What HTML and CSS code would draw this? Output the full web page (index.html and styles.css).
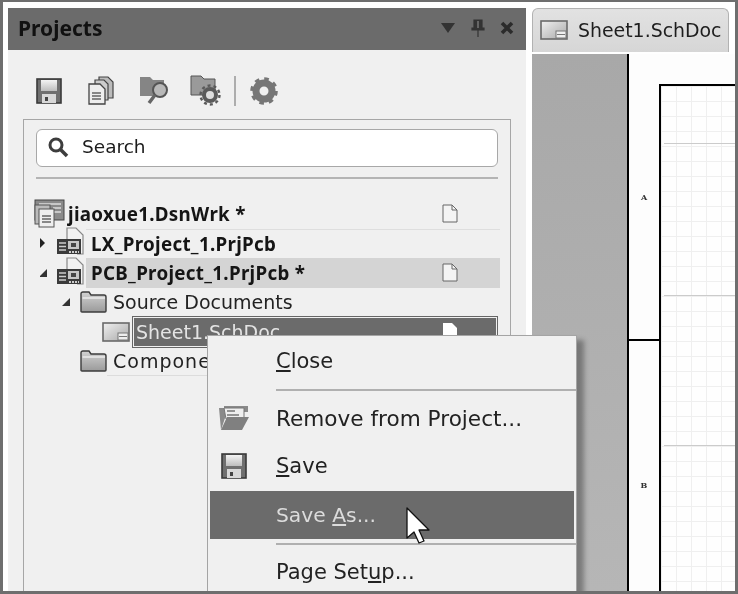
FILE: index.html
```html
<!DOCTYPE html>
<html lang="en">
<head>
<meta charset="utf-8">
<title>Projects</title>
<link rel="stylesheet" href="styles.css">
</head>
<body>
<svg class="defs" width="0" height="0" aria-hidden="true">
  <defs>
    <linearGradient id="fold" x1="0" y1="0" x2="0" y2="1"><stop offset="0" stop-color="#d2d2d2"/><stop offset="1" stop-color="#9a9a9a"/></linearGradient>
    <linearGradient id="sch" x1="0" y1="0" x2="1" y2="1"><stop offset="0" stop-color="#f0f0f0"/><stop offset="1" stop-color="#a8a8a8"/></linearGradient>
    <linearGradient id="disk" x1="0" y1="0" x2="0" y2="1"><stop offset="0" stop-color="#f4f4f4"/><stop offset="1" stop-color="#bdbdbd"/></linearGradient>
    <symbol id="folder" viewBox="0 0 27 22"><path d="M1 20V3q0-2 2-2h6l2 3h13q2 0 2 2v14q0 1-1 1H2q-1 0-1-1z" fill="url(#fold)" stroke="#3c3c3c" stroke-width="1.4"/><path d="M2.5 7H25" stroke="#eee" stroke-width="1.4"/></symbol>
    <symbol id="sheet" viewBox="0 0 28 20"><rect x="1" y="1" width="26" height="18" fill="url(#sch)" stroke="#6a6a6a" stroke-width="1.6"/><rect x="16" y="11" width="10" height="7" fill="#eee" stroke="#777"/><path d="M17 14.500h8" stroke="#777"/></symbol>
    <symbol id="doc" viewBox="0 0 16 19"><path d="M1 1h9l5 5v12H1z" fill="#f4f4f4" stroke="#666" stroke-width="1"/><path d="M10 1v5h5" fill="none" stroke="#666" stroke-width="1"/></symbol>
    <symbol id="docw" viewBox="0 0 16 19"><path d="M1 1h9l5 5v12H1z" fill="#fff"/></symbol>
    <symbol id="pcb" viewBox="0 0 30 30"><path d="M11 14V2h9l7 7v19h-6" fill="#f2f2f2" stroke="#888" stroke-width="1.200"/><rect x="1" y="13" width="24" height="15" fill="#3a3a3a"/><path d="M3 17h7M3 20.500h7M3 24h7" stroke="#ccc" stroke-width="1.600"/><rect x="12" y="15" width="11" height="8" fill="#c4c4c4"/><rect x="15" y="17" width="5" height="4" fill="#444"/><path d="M13 26h10" stroke="#ccc" stroke-width="2" stroke-dasharray="2 1"/></symbol>
    <symbol id="save" viewBox="0 0 26 26"><rect x="1" y="1" width="24" height="24" fill="#6f6f6f" stroke="#3a3a3a" stroke-width="1.600"/><rect x="5" y="2" width="16" height="11" fill="url(#disk)"/><rect x="6" y="16" width="14" height="9" fill="#d8d8d8"/><rect x="9" y="19" width="3" height="4" fill="#444"/></symbol>
    <symbol id="gear" viewBox="0 0 28 28"><circle cx="14" cy="14" r="8" fill="none" stroke="#767676" stroke-width="7"/><circle cx="14" cy="14" r="12" fill="none" stroke="#767676" stroke-width="3.600" stroke-dasharray="4.500 4.900"/></symbol>
  </defs>
</svg>
<div class="frame">
  <section class="panel">
    <header class="panel-title">
      <h1>Projects</h1>
      <div class="title-tools">
        <svg width="16" height="12" viewBox="0 0 16 12"><path d="M1 1h14L8 11z" fill="#333"/></svg>
        <svg width="14" height="18" viewBox="0 0 14 18"><path d="M3 1h8v8h2v2H1V9h2zM7 11v7" fill="#333" stroke="#333" stroke-width="1.2"/><path d="M7 2v7" stroke="#777" stroke-width="1.500"/></svg>
        <svg width="14" height="14" viewBox="0 0 14 14"><path d="M2 2l10 10M12 2L2 12" stroke="#2b2b2b" stroke-width="3.600"/></svg>
      </div>
    </header>
    <div class="toolbar">
      <svg class="t-save" width="26" height="26"><use href="#save"/></svg>
      <svg class="t-docs" width="27" height="29" viewBox="0 0 27 29"><path d="M11 1h9l5 5v16H11z" fill="#bbb" stroke="#444" stroke-width="1.200"/><path d="M7 4h9l4 4v16H7z" fill="#ccc" stroke="#444" stroke-width="1.200"/><path d="M1 8h11l5 5v15H1z" fill="#eee" stroke="#444" stroke-width="1.300"/><path d="M4 17h9M4 20h9M4 23h9" stroke="#666" stroke-width="1.300"/></svg>
      <svg class="t-find" width="31" height="29" viewBox="0 0 31 29"><path d="M1 20V1h10l3 3h11v16z" fill="#858585"/><circle cx="21" cy="14" r="7" fill="#b8b8b8" stroke="#555" stroke-width="2"/><path d="M16 19l-6 8" stroke="#666" stroke-width="3.400"/></svg>
      <svg class="t-fgear" width="31" height="31" viewBox="0 0 31 31"><path d="M1 20V1h10l3 3h11v16z" fill="#9a9a9a" stroke="#555"/><circle cx="20" cy="20" r="6" fill="#ddd" stroke="#5a5a5a" stroke-width="4"/><circle cx="20" cy="20" r="9.500" fill="none" stroke="#5a5a5a" stroke-width="2.400" stroke-dasharray="3 3"/></svg>
      <span class="t-sep"></span>
      <svg class="t-gear" width="28" height="28"><use href="#gear"/></svg>
    </div>
    <div class="box">
      <div class="search">
        <svg width="22" height="22" viewBox="0 0 22 22"><circle cx="9" cy="9" r="6" fill="none" stroke="#3d3d3d" stroke-width="3"/><path d="M13.500 13.500L20 20" stroke="#3d3d3d" stroke-width="3.600"/></svg>
        <span>Search</span>
      </div>
      <hr class="rule">
      <ul class="tree">
        <li class="row row-root">
          <svg class="i-wrk" width="32" height="30" viewBox="0 0 32 30"><rect x="1" y="1" width="29" height="20" fill="#8a8a8a" stroke="#444"/><path d="M5 5h22M19 9h8M19 13h8" stroke="#ddd" stroke-width="1.500"/><rect x="1" y="6" width="15" height="19" fill="#bbb" stroke="#555"/><rect x="5" y="10" width="15" height="18" fill="#eee" stroke="#555"/><path d="M8 17h9M8 20h9M8 23h9" stroke="#666" stroke-width="1.300"/></svg>
          <div class="label bold"><span>jiaoxue1.DsnWrk *</span><svg class="doc" width="16" height="19"><use href="#doc"/></svg></div>
        </li>
        <li class="row row-l1">
          <svg class="arrow" width="16" height="12" viewBox="0 0 16 12"><path d="M-1 0l6 6-6 6z" fill="#222"/></svg>
          <svg class="i-pcb" width="30" height="30"><use href="#pcb"/></svg>
          <div class="label bold rule-top"><span>LX_Project_1.PrjPcb</span></div>
        </li>
        <li class="row row-l1">
          <svg class="arrow" width="16" height="10" viewBox="0 0 16 10"><path d="M-1 9h8V1z" fill="#333"/></svg>
          <svg class="i-pcb" width="30" height="30"><use href="#pcb"/></svg>
          <div class="label bold current"><span>PCB_Project_1.PrjPcb *</span><svg class="doc" width="16" height="19"><use href="#doc"/></svg></div>
        </li>
        <li class="row row-l2">
          <svg class="arrow" width="18" height="10" viewBox="0 0 18 10"><path d="M0 9h8V1z" fill="#333"/></svg>
          <svg class="i-fold" width="27" height="22"><use href="#folder"/></svg>
          <div class="label"><span>Source Documents</span></div>
        </li>
        <li class="row row-l3">
          <svg class="i-sheet" width="28" height="20"><use href="#sheet"/></svg>
          <div class="label selected"><span>Sheet1.SchDoc</span><svg class="doc" width="16" height="19"><use href="#docw"/></svg></div>
        </li>
        <li class="row row-l2b">
          <svg class="i-fold" width="27" height="22"><use href="#folder"/></svg>
          <div class="label rule-bottom spaced"><span>Components</span></div>
        </li>
      </ul>
    </div>
  </section>

  <section class="editor">
    <div class="tabs">
      <div class="tab">
        <svg width="28" height="20"><use href="#sheet"/></svg>
        <span>Sheet1.SchDoc</span>
      </div>
    </div>
    <div class="workspace">
      <div class="sheet">
        <div class="ruler">
          <div class="zone zone-a">A</div>
          <div class="zone zone-b">B</div>
        </div>
        <div class="drawing"></div>
      </div>
    </div>
  </section>

  <nav class="menu">
    <div class="item item-first"><span class="ico"></span><span><u>C</u>lose</span></div>
    <div class="sep"></div>
    <div class="item">
      <span class="ico"><svg width="32" height="26" viewBox="0 0 32 26"><path d="M3 25L1 3h5V1h24v6H9z" fill="#8a8a8a"/><path d="M6 3h20v11H8z" fill="#efefef" stroke="#777"/><path d="M9 6h8M9 10h12" stroke="#777" stroke-width="1.500"/><path d="M3 25l6-13h22l-7 13z" fill="#808080"/></svg></span>
      <span class="wide">Remove from Project...</span>
    </div>
    <div class="item">
      <span class="ico"><svg width="26" height="26"><use href="#save"/></svg></span>
      <span><u>S</u>ave</span>
    </div>
    <div class="item item-hot"><span class="ico"></span><span class="narrow">Save <u>A</u>s...</span></div>
    <div class="sep sep-tight"></div>
    <div class="item"><span class="ico"></span><span>Page Set<u>u</u>p...</span></div>
  </nav>

  <svg class="cursor" width="25" height="38" viewBox="0 0 25 38"><path d="M1 1v30l7-6 5 11 5-2-5-11h10z" fill="#fff" stroke="#111" stroke-width="1.300" stroke-linejoin="round"/></svg>
</div>
</body>
</html>
```

FILE: styles.css
```css
* { box-sizing: border-box; }
html, body { margin: 0; padding: 0; background: #fff; }
.defs { display: block; height: 0; }
.frame {
  position: relative;
  display: flex;
  width: 738px;
  height: 594px;
  padding: 6px 0 0 5px;
  overflow: hidden;
  background: #fff;
  border: solid #6e6e6e;
  border-width: 2px 3px 3px 3px;
  font-family: "DejaVu Sans", sans-serif;
  color: #222;
  filter: blur(0.6px);
}

/* left panel */
.panel {
  display: flex;
  flex-direction: column;
  flex: none;
  width: 518px;
  background: #f0f0f0;
}
.panel-title {
  display: flex;
  align-items: center;
  justify-content: space-between;
  flex: none;
  height: 42px;
  padding: 0 12px 3px 10px;
  background: #6b6b6b;
}
.panel-title h1 {
  margin: 0;
  font-family: "Noto Sans", sans-serif;
  font-size: 21px;
  font-weight: 700;
  color: #111;
}
.title-tools { display: flex; align-items: center; gap: 15px; }
.toolbar {
  display: flex;
  align-items: center;
  flex: none;
  height: 69px;
  padding: 12px 0 0 28px;
}
.t-docs { margin-left: 26px; }
.t-find { margin-left: 24px; }
.t-fgear { margin-left: 20px; }
.t-sep { width: 2px; height: 30px; margin-left: 13px; background: #adadad; }
.t-gear { margin-left: 14px; }
.box {
  flex: 1;
  margin: 0 15px;
  padding: 9px 10px 0;
  border: 1px solid #a6a6a6;
  border-bottom: 0;
}
.search {
  display: flex;
  align-items: center;
  gap: 13px;
  height: 38px;
  margin: 0 2px;
  padding: 0 0 3px 10px;
  background: #fff;
  border: 1px solid #a8a8a8;
  border-radius: 6px;
  font-size: 18.500px;
  color: #1c1c1c;
}
.rule { height: 2px; margin: 10px 2px 0; border: 0; background: #b4b4b4; }
.tree { margin: 20px 0 0; padding: 0; list-style: none; }
.row { display: flex; align-items: center; height: 29.500px; }
.row-l1 { padding-left: 6px; }
.row-l2 { padding-left: 28px; }
.row-l2b { padding-left: 46px; }
.row-l3 { padding-left: 68px; }
.arrow, .i-wrk, .i-pcb, .i-fold, .i-sheet { flex: none; }
.i-pcb { margin-top: -4px; }
.label {
  display: flex;
  align-items: center;
  justify-content: space-between;
  flex: 1;
  height: 100%;
  padding: 0 42px 0 5px;
  font-size: 19px;
  white-space: nowrap;
}
.row-l2 .label, .row-l2b .label { padding-left: 6px; }
.spaced { letter-spacing: 1px; }
.bold {
  font-family: "Noto Sans", sans-serif;
  font-weight: 700;
  font-size: 18.800px;
  letter-spacing: 0.3px;
  color: #151515;
}
.row-root .label { padding-left: 2px; }
.rule-top { border-top: 1px solid #dedede; }
.rule-bottom { border-bottom: 1px solid #dcdcdc; }
.current { background: #d4d4d4; }
.selected {
  margin: 0 3px 0 3px;
  padding: 0 38px 0 2px;
  background: #6b6b6b;
  border: 1px solid #f0f0f0;
  outline: 1px solid #666;
  outline-offset: 0;
  color: #e4e4e4;
}

/* right side */
.editor {
  display: flex;
  flex-direction: column;
  flex: 1;
  min-width: 0;
  margin-left: 6px;
}
.tabs { flex: none; height: 46px; padding-right: 6px; }
.tab {
  display: flex;
  align-items: center;
  gap: 10px;
  height: 44px;
  padding: 0 0 2px 7px;
  background: linear-gradient(#e2e2e2, #d6d6d6);
  border: 1px solid #b2b2b2;
  border-bottom: 0;
  border-radius: 6px 6px 0 0;
  font-size: 18.900px;
  color: #1e1e1e;
  white-space: nowrap;
}
.workspace {
  flex: 1;
  min-height: 0;
  padding-left: 95px;
  background: linear-gradient(#a8a8a8, #b6b6b6);
}
.sheet {
  display: flex;
  height: 100%;
  background: #fdfdfd;
  border-left: 2px solid #000;
}
.ruler { flex: none; display: flex; flex-direction: column; width: 30px; }
.zone {
  display: flex;
  align-items: center;
  justify-content: center;
  flex: none;
  font-family: "DejaVu Serif", serif;
  font-size: 8px;
  font-weight: 700;
  color: #333;
}
.zone-a { height: 287px; border-bottom: 2px solid #000; }
.zone-b { height: 287px; }
.drawing {
  flex: 1;
  margin-top: 30px;
  border: solid #000;
  border-width: 2px 0 0 2px;
  background-color: #fefefe;
  background-image:
    linear-gradient(#cbcbcb, #cbcbcb),
    linear-gradient(#cbcbcb, #cbcbcb),
    linear-gradient(#cbcbcb, #cbcbcb),
    repeating-linear-gradient(to right, #efefef 0 1px, transparent 1px 15px),
    repeating-linear-gradient(to bottom, #efefef 0 1px, transparent 1px 15px);
  background-repeat: no-repeat;
  background-size: 100% 1px, 100% 1px, 100% 1px, 100% 100%, 100% 100%;
  background-position: 3px 57px, 3px 209px, 3px 359px, 0 0, 0 0;
}

/* context menu */
.menu {
  position: absolute;
  left: 204px;
  top: 333px;
  width: 370px;
  height: 262px;
  padding: 0 1px;
  background: #f0f0f0;
  border: 1px solid #a4a4a4;
  box-shadow: 7px 5px 5px rgba(0, 0, 0, 0.32);
  font-size: 21px;
  color: #222;
}
.item {
  display: flex;
  align-items: center;
  height: 48px;
  margin: 0 1px;
  white-space: nowrap;
}
.item-first { height: 53px; padding-bottom: 4px; }
.item-hot { background: #6b6b6b; color: #dcdcdc; margin-top: 1px; }
.wide { font-size: 21.600px; }
.narrow { font-size: 20.300px; }
.ico {
  display: flex;
  align-items: center;
  justify-content: center;
  flex: none;
  width: 66px;
  padding-right: 18px;
}
.sep { height: 2px; margin: 0 -1px 3px 67px; background: #b0b0b0; }
.sep-tight { margin-top: 4px; }
.cursor { position: absolute; left: 403px; top: 505px; }
```
